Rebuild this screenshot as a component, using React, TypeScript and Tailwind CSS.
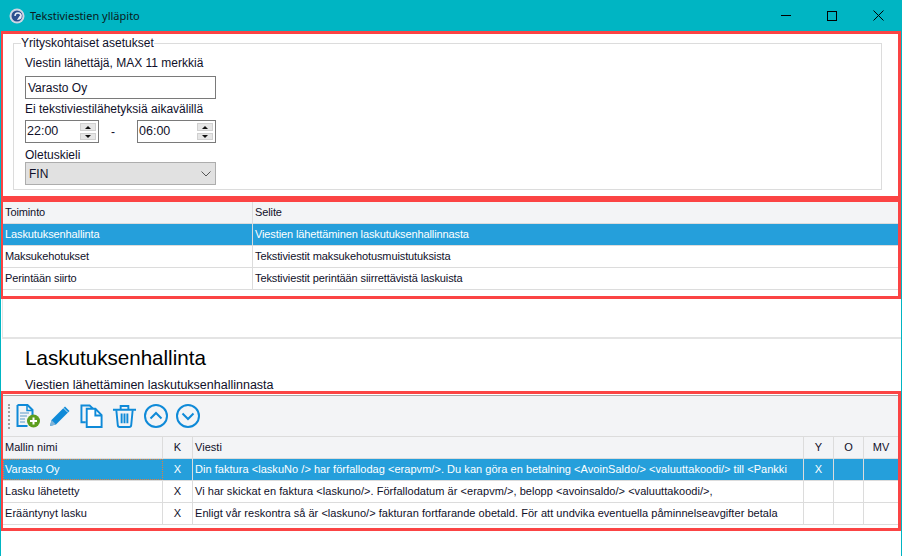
const gridFont = "font-['Liberation_Sans',Arial,sans-serif] text-[11px] text-[#10102a]";

const rules = [
  { name: "Toiminto", desc: "Selite" },
  { name: "Laskutuksenhallinta", desc: "Viestien lähettäminen laskutuksenhallinnasta", selected: true },
  { name: "Maksukehotukset", desc: "Tekstiviestit maksukehotusmuistutuksista" },
  { name: "Perintään siirto", desc: "Tekstiviestit perintään siirrettävistä laskuista" },
];

const templates = [
  {
    name: "Varasto Oy",
    k: "X",
    text: "Din faktura <laskuNo /> har förfallodag <erapvm/>. Du kan göra en betalning <AvoinSaldo/> <valuuttakoodi/> till <Pankki",
    y: "X",
    selected: true,
  },
  {
    name: "Lasku lähetetty",
    k: "X",
    text: "Vi har skickat en faktura <laskuno/>. Förfallodatum är <erapvm/>, belopp <avoinsaldo/> <valuuttakoodi/>,",
    y: "",
  },
  {
    name: "Erääntynyt lasku",
    k: "X",
    text: "Enligt vår reskontra så är <laskuno/> fakturan fortfarande obetald. För att undvika eventuella påminnelseavgifter betala",
    y: "",
  },
];

const Spinner = ({ value, width }: { value: string; width: string }) => (
  <div className={`${width} h-[23px] border border-[#7a7a7a] bg-white flex items-center justify-between pl-[1px] pr-[2px]`}>
    <span className="text-[12.5px]">{value}</span>
    <div className="flex flex-col gap-[2px]">
      <div className="w-[16px] h-[8px] bg-[#e6e6e6] border border-[#d0d0d0] flex items-center justify-center">
        <div className="w-0 h-0 border-x-[3px] border-x-transparent border-b-[3px] border-b-[#111]" />
      </div>
      <div className="w-[16px] h-[7px] bg-[#e6e6e6] border border-[#d0d0d0] flex items-center justify-center">
        <div className="w-0 h-0 border-x-[3px] border-x-transparent border-t-[3px] border-t-[#111]" />
      </div>
    </div>
  </div>
);

const NewDocIcon = () => (
  <svg width="25" height="24" viewBox="0 0 25 24" fill="none">
    <path d="M1.500 1h10l5 5v7M1.500 1v21h10" stroke="#0f8ad8" strokeWidth="2" />
    <path d="M11 1.500V6.500h5.500" stroke="#0f8ad8" strokeWidth="1.500" />
    <path d="M4 9h9M4 12h7M4 15h5M4 18h5" stroke="#5a9bc9" strokeWidth="1" />
    <circle cx="17.500" cy="17" r="6.500" fill="#5c9e1e" />
    <path d="M17.500 13.500v7M14 17h7" stroke="#fff" strokeWidth="2" />
  </svg>
);

const PencilIcon = () => (
  <svg width="22" height="22" viewBox="0 0 22 22" fill="none">
    <path d="M1 21l1.500-6L16 1.500 20.500 6 7 19.500z" fill="#0f8ad8" />
    <path d="M14.500 3l4.500 4.500" stroke="#cfe4f3" strokeWidth="1" />
    <path d="M1 21l1.500-6L7 19.500z" fill="#7fb3d8" />
  </svg>
);

const CopyIcon = () => (
  <svg width="24" height="24" viewBox="0 0 25 25" fill="none">
    <path d="M6 19H1.500V1.500H10l4 4" stroke="#0f8ad8" strokeWidth="2" />
    <path d="M7 5h9l6.500 6.500V24H7z" fill="#fff" stroke="#0f8ad8" strokeWidth="2" />
    <path d="M16 5v7h6.500" stroke="#0f8ad8" strokeWidth="2" />
  </svg>
);

const TrashIcon = () => (
  <svg width="25" height="24" viewBox="0 0 26 25" fill="none">
    <path d="M1 6h24M9 6V2h8v4" stroke="#0f8ad8" strokeWidth="2" />
    <path d="M4.500 6.500l1.500 15.500q.2 2 2 2h10q1.800 0 2-2L21.500 6.500" stroke="#0f8ad8" strokeWidth="2" />
    <path d="M10 10v10M13 10v10M16 10v10" stroke="#0f8ad8" strokeWidth="2" />
  </svg>
);

const CircleArrow = ({ up }: { up?: boolean }) => (
  <svg width="24" height="24" viewBox="0 0 24 24" fill="none">
    <circle cx="12" cy="12" r="11" stroke="#0f8ad8" strokeWidth="2" />
    <path d={up ? "M6.500 14.500L12 9l5.500 5.500" : "M6.500 9.500L12 15l5.500-5.500"} stroke="#0f8ad8" strokeWidth="2" />
  </svg>
);

const App = () => {
  return (
    <div className="w-[902px] h-[556px] overflow-hidden bg-white flex flex-col border-x border-[#00b5c3] font-['Liberation_Sans',Arial,sans-serif] text-[12px] text-[#10102a]">
      <div className="h-[31px] shrink-0 -mx-px bg-[#00b5c3] flex items-center pl-[9px] text-[#0a1a20]">
        <svg width="16" height="16" viewBox="0 0 16 16" className="mr-[5px]">
          <circle cx="8" cy="8" r="7.500" fill="#cdd6e4" />
          <circle cx="8" cy="8" r="5.500" fill="#2a4f90" />
          <path d="M6 8a3 3 0 1 1 3.500 3l3-4.500" fill="none" stroke="#e8eef6" strokeWidth="1.500" />
        </svg>
        <span className="font-['Noto_Sans',sans-serif] text-[11px] pt-px">Tekstiviestien ylläpito</span>
        <div className="ml-auto flex items-center">
          <div className="w-[46px] flex justify-center">
            <div className="w-[10px] h-px bg-black" />
          </div>
          <div className="w-[46px] flex justify-center">
            <div className="w-[10px] h-[10px] border border-black" />
          </div>
          <div className="w-[46px] flex justify-center mr-[1px]">
            <svg width="11" height="11" viewBox="0 0 11 11">
              <path d="M.5.5l10 10M10.500.5l-10 10" stroke="#000" strokeWidth="1" />
            </svg>
          </div>
        </div>
      </div>

      <section className="h-[168px] shrink-0 -ml-px border-[3px] border-[#fb4444] pl-[10px] pr-[16px] pt-[3px]">
        <fieldset className="h-[153px] border border-[#dcdcdc] pl-[11px]">
          <legend className="-ml-[4px] leading-[13px]">Yrityskohtaiset asetukset</legend>
          <div className="leading-[14px] mt-[6px]">Viestin lähettäjä, MAX 11 merkkiä</div>
          <div className="w-[191px] h-[23px] mt-[6px] border border-[#7a7a7a] px-[2px] flex items-center">Varasto Oy</div>
          <div className="leading-[14px] mt-[3px]">Ei tekstiviestilähetyksiä aikavälillä</div>
          <div className="flex items-center mt-[4px]">
            <Spinner value="22:00" width="w-[74px]" />
            <span className="w-[38px] pl-[12px]">-</span>
            <Spinner value="06:00" width="w-[79px]" />
          </div>
          <div className="leading-[14px] mt-[5px]">Oletuskieli</div>
          <div className="w-[191px] h-[23px] bg-[#e1e1e1] border border-[#adadad] flex items-center justify-between pl-[3px] pr-[3px]">
            <span>FIN</span>
            <svg width="10" height="6" viewBox="0 0 10 6" className="mr-[1px]">
              <path d="M.5.5L5 5 9.500.5" fill="none" stroke="#555" strokeWidth="1" />
            </svg>
          </div>
        </fieldset>
      </section>

      <section className={`h-[100px] shrink-0 -ml-px border-[3px] border-[#fb4444] flex flex-col tracking-[-0.11px] ${gridFont}`}>
        {rules.map((r, i) => (
          <div
            key={r.name}
            className={`h-[22px] flex border-b border-[#dcdcdc] ${r.selected ? "bg-[#259fdb] text-white" : i === 0 ? "bg-[#f3f4f6]" : ""}`}
          >
            <div className="w-[250px] pl-[2px] flex items-center border-r border-[#dcdcdc]">{r.name}</div>
            <div className="flex-1 pl-[2px] flex items-center">{r.desc}</div>
          </div>
        ))}
      </section>

      <div className="h-[40px] shrink-0 -mr-px ml-[1px] border-l border-b-2 border-[#e4e4e4]" />

      <div className="h-[52px] shrink-0 pl-[24px] pt-[7px]">
        <h1 className="text-[20.6px] leading-[24px] text-black">Laskutuksenhallinta</h1>
        <p className="mt-[8px] text-[12.5px] leading-[14px]">Viestien lähettäminen laskutuksenhallinnasta</p>
      </div>

      <section className={`h-[140px] shrink-0 -ml-px border-[3px] border-[#fb4444] flex flex-col tracking-[0.04px] ${gridFont}`}>
        <div className="h-[41px] mt-[1px] shrink-0 bg-[#f3f4f6] border-t border-[#a8a8a8] flex items-center pl-[5px]">
          <div className="h-[25px] border-l-2 border-dotted border-[#a0a0a0] mr-[6px]" />
          <div className="flex items-center">
            <div className="w-[33px]"><NewDocIcon /></div>
            <div className="w-[31px]"><PencilIcon /></div>
            <div className="w-[32px]"><CopyIcon /></div>
            <div className="w-[32px]"><TrashIcon /></div>
            <div className="w-[32px]"><CircleArrow up /></div>
            <div className="w-[32px]"><CircleArrow /></div>
          </div>
        </div>
        <div className="h-[23px] flex bg-[#f3f4f6] border-y border-[#dcdcdc]">
          <div className="w-[160px] pl-[2px] flex items-center border-r border-[#dcdcdc]">Mallin nimi</div>
          <div className="w-[30px] flex items-center justify-center border-r border-[#dcdcdc]">K</div>
          <div className="w-[611px] pl-[2px] flex items-center border-r border-[#dcdcdc]">Viesti</div>
          <div className="w-[30px] flex items-center justify-center border-r border-[#dcdcdc]">Y</div>
          <div className="w-[30px] flex items-center justify-center border-r border-[#dcdcdc]">O</div>
          <div className="flex-1 flex items-center justify-center">MV</div>
        </div>
        {templates.map((t) => (
          <div
            key={t.name}
            className={`h-[22px] flex border-b ${t.selected ? "bg-[#259fdb] text-white border-[#dcdcdc]" : "border-[#dcdcdc]"}`}
          >
            <div
              className={`w-[160px] flex items-center ${t.selected ? "pl-[1px] border border-dotted border-[#e0803a]" : "pl-[2px] border-r border-[#dcdcdc]"}`}
            >
              {t.name}
            </div>
            <div className="w-[30px] flex items-center justify-center border-r border-[#dcdcdc]">{t.k}</div>
            <div className="w-[611px] pl-[2px] flex items-center border-r border-[#dcdcdc] whitespace-nowrap overflow-hidden">{t.text}</div>
            <div className="w-[30px] flex items-center justify-center border-r border-[#dcdcdc]">{t.y}</div>
            <div className="w-[30px] border-r border-[#dcdcdc]" />
            <div className="flex-1" />
          </div>
        ))}
      </section>
    </div>
  );
};

export default App;
